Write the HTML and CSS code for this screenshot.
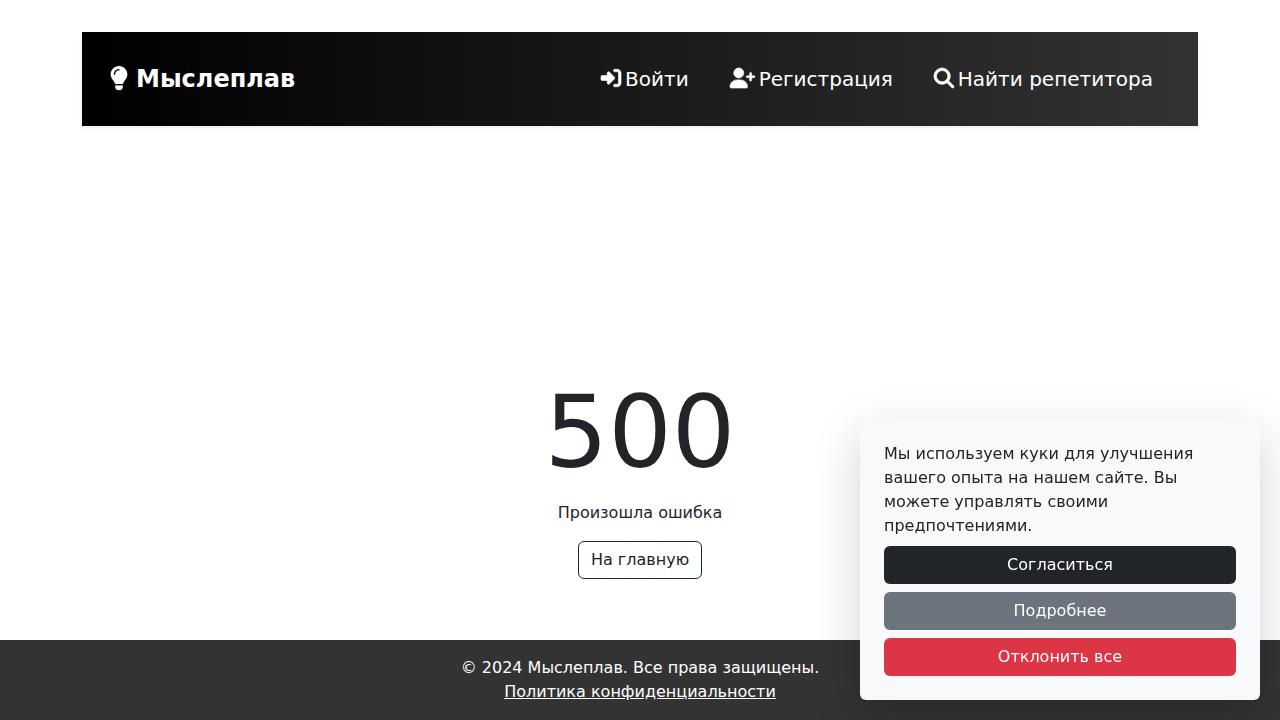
FILE: index.html
```html
<!DOCTYPE html>
<html lang="ru">
<head>
<meta charset="utf-8">
<meta name="viewport" content="width=device-width, initial-scale=1">
<title>Мыслеплав</title>
<link rel="stylesheet" href="styles.css">
</head>
<body class="page">
<header class="container">
  <nav class="navbar">
    <a class="brand" href="#">
      <svg class="brand-icon" viewBox="0 0 384 512" aria-hidden="true"><path d="M272 384c9.600-31.900 29.500-59.100 49.200-86.200c5.200-7.100 10.400-14.200 15.400-21.400c19.800-28.500 31.400-63 31.400-100.300C368 78.800 289.200 0 192 0S16 78.800 16 176c0 37.300 11.600 71.900 31.400 100.300c5 7.200 10.200 14.300 15.400 21.400c19.800 27.100 39.700 54.400 49.200 86.200H272zM112 416H272V454q0 10-6 18l-17 26q-9 14-26 14H161q-17 0-26-14l-17-26q-6-8-6-18zM112 176c0 8.800-7.200 16-16 16s-16-7.200-16-16c0-61.900 50.100-112 112-112c8.800 0 16 7.200 16 16s-7.200 16-16 16c-44.200 0-80 35.800-80 80z"/></svg>
      <span>Мыслеплав</span>
    </a>
    <ul class="nav-list">
      <li><a class="nav-link" href="#">
        <svg class="nav-icon" viewBox="0 0 512 512" aria-hidden="true"><path d="M217.900 105.900L340.700 228.700c7.200 7.200 11.300 17.100 11.300 27.300s-4.100 20.100-11.300 27.300L217.900 406.100c-6.400 6.400-15 9.900-24 9.900c-18.700 0-33.900-15.200-33.900-33.900l0-62.100L32 320c-17.700 0-32-14.300-32-32l0-64c0-17.700 14.300-32 32-32l128 0 0-62.100c0-18.700 15.200-33.900 33.900-33.900c9 0 17.600 3.600 24 9.900zM352 416l64 0c17.700 0 32-14.300 32-32l0-256c0-17.700-14.300-32-32-32l-64 0c-17.700 0-32-14.300-32-32s14.300-32 32-32l64 0c53 0 96 43 96 96l0 256c0 53-43 96-96 96l-64 0c-17.700 0-32-14.300-32-32s14.300-32 32-32z"/></svg>
        <span>Войти</span></a></li>
      <li><a class="nav-link" href="#">
        <svg class="nav-icon" viewBox="0 0 640 512" aria-hidden="true"><path d="M96 128a128 128 0 1 1 256 0A128 128 0 1 1 96 128zM0 482.300C0 383.800 79.800 304 178.300 304l91.400 0C368.200 304 448 383.800 448 482.300c0 16.400-13.300 29.700-29.700 29.700L29.700 512C13.300 512 0 498.700 0 482.300zM504 312l0-64-64 0c-13.300 0-24-10.700-24-24s10.700-24 24-24l64 0 0-64c0-13.300 10.700-24 24-24s24 10.700 24 24l0 64 64 0c13.300 0 24 10.700 24 24s-10.700 24-24 24l-64 0 0 64c0 13.300-10.700 24-24 24s-24-10.700-24-24z"/></svg>
        <span>Регистрация</span></a></li>
      <li><a class="nav-link" href="#">
        <svg class="nav-icon" viewBox="0 0 512 512" aria-hidden="true"><path d="M416 208c0 45.900-14.900 88.300-40 122.700L502.600 457.400c12.500 12.500 12.500 32.800 0 45.300s-32.800 12.500-45.300 0L330.700 376c-34.400 25.200-76.800 40-122.700 40C93.100 416 0 322.900 0 208S93.100 0 208 0S416 93.100 416 208zM208 352a144 144 0 1 0 0-288 144 144 0 1 0 0 288z"/></svg>
        <span>Найти репетитора</span></a></li>
    </ul>
  </nav>
</header>
<main class="error">
  <h1 class="error-code">500</h1>
  <p class="error-text">Произошла ошибка</p>
  <a class="btn btn-outline" href="#">На главную</a>
</main>
<footer class="footer">
  <p class="footer-text">© 2024 Мыслеплав. Все права защищены.</p>
  <a class="footer-link" href="#">Политика конфиденциальности</a>
</footer>
<section class="cookie" aria-label="Куки">
  <p class="cookie-text">Мы используем куки для улучшения вашего опыта на нашем сайте. Вы можете управлять своими предпочтениями.</p>
  <button class="btn btn-dark" type="button">Согласиться</button>
  <button class="btn btn-secondary" type="button">Подробнее</button>
  <button class="btn btn-danger" type="button">Отклонить все</button>
</section>
</body>
</html>
```

FILE: styles.css
```css
*, *::before, *::after { box-sizing: border-box; }

.page {
  display: flex;
  flex-direction: column;
  min-height: 100vh;
  margin: 0;
  background: #fff;
  color: #212529;
  font-family: "DejaVu Sans", sans-serif;
  font-size: 16px;
  line-height: 24px;
}

.container {
  width: 100%;
  max-width: 1140px;
  margin: 32px auto 0;
  padding: 0 12px;
}

.navbar {
  display: flex;
  flex-wrap: wrap;
  align-items: center;
  justify-content: space-between;
  padding: 24px 28px;
  background: linear-gradient(to right, #000, #333);
  box-shadow: 0 2px 4px rgba(0, 0, 0, 0.075);
}

.brand {
  display: flex;
  align-items: center;
  gap: 8px;
  color: #fff;
  font-size: 24px;
  font-weight: 700;
  line-height: 36px;
  text-decoration: none;
}

.brand-icon,
.nav-icon {
  margin-bottom: 2px;
  overflow: visible;
  fill: currentColor;
  stroke: currentColor;
}

.brand-icon { height: 24px; stroke-width: 4; }
.nav-icon { height: 20px; stroke-width: 16; }

.nav-list {
  display: flex;
  flex-wrap: wrap;
  gap: 8px;
  margin: 0;
  padding: 0;
  list-style: none;
}

.nav-link {
  display: flex;
  align-items: center;
  gap: 4px;
  padding: 8px 17px 8px 16px;
  color: #fff;
  font-size: 20px;
  line-height: 30px;
  text-decoration: none;
}

.error {
  display: flex;
  flex: 1;
  flex-direction: column;
  align-items: center;
  justify-content: flex-end;
  padding-bottom: 61px;
  text-align: center;
}

.error-code {
  margin: 0 0 8px;
  font-size: 100px;
  font-weight: 400;
  line-height: 120px;
}

.error-text { margin: 0 0 16px; }

.btn {
  display: block;
  padding: 6px 12px;
  border: 1px solid transparent;
  border-radius: 6px;
  color: #fff;
  font: inherit;
  text-align: center;
  text-decoration: none;
  cursor: pointer;
}

.btn-outline { border-color: #212529; color: #212529; }
.btn-dark { background: #212529; }
.btn-secondary { background: #6c757d; }
.btn-danger { background: #dc3545; }

.footer {
  padding: 16px;
  background: #333;
  color: #fff;
  text-align: center;
}

.footer-text { margin: 0; }
.footer-link { color: #fff; }

.cookie {
  position: fixed;
  right: 20px;
  bottom: 20px;
  display: flex;
  flex-direction: column;
  gap: 8px;
  width: 400px;
  max-width: calc(100% - 40px);
  padding: 24px;
  border-radius: 6px;
  background: #f8f9fa;
  box-shadow: 0 16px 48px rgba(0, 0, 0, 0.175);
}

.cookie-text { margin: 0; }
```
